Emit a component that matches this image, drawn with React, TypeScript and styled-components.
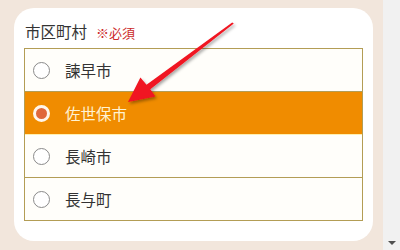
import React, { useState } from "react";
import styled, { createGlobalStyle } from "styled-components";

const Global = createGlobalStyle`
  html, body { margin: 0; padding: 0; }
  body {
    font-family: "Noto Sans CJK JP", "Noto Sans", sans-serif;
    background: #f2e6dc;
    overflow: hidden;
  }
`;

const Page = styled.div`
  position: relative;
  display: flex;
  width: 400px;
  height: 250px;
  overflow: hidden;
`;

const Main = styled.div`
  flex: 1;
  background: #f2e6dc;
  padding: 8px 10px 0 14px;
`;

const Scrollbar = styled.div`
  width: 17px;
  background: #f1f1f1;
  display: flex;
  flex-direction: column;
  justify-content: flex-end;
  align-items: center;
  padding-bottom: 5px;
  box-sizing: border-box;
`;

const ScrollArrow = styled.div`
  width: 0;
  height: 0;
  border-left: 4px solid transparent;
  border-right: 4px solid transparent;
  border-top: 4px solid #505050;
`;

const Card = styled.div`
  background: #fff;
  border-radius: 20px;
  height: 233px;
  box-sizing: border-box;
  padding: 10px 10px 0 10px;
`;

const Label = styled.div`
  display: flex;
  align-items: baseline;
  gap: 9px;
  font-size: 15.5px;
  color: #333;
  height: 30px;
  padding-left: 1px;
  line-height: 27px;
`;

const Required = styled.span`
  font-size: 13px;
  color: #cc2a2a;
`;

const List = styled.div`
  border: 1px solid #b39d55;
  display: flex;
  flex-direction: column;
`;

const Row = styled.label<{ $selected: boolean; $last?: boolean }>`
  display: flex;
  align-items: center;
  height: 42px;
  padding-left: 8px;
  gap: 15px;
  background: ${(p) => (p.$selected ? "#f08c00" : "#fffefa")};
  color: ${(p) => (p.$selected ? "#fff3d2" : "#333")};
  font-size: 15.5px;
  border-bottom: ${(p) => (p.$last ? "none" : p.$selected ? "1px solid #fff0b0" : "1px solid #b39d55")};
  cursor: pointer;
`;

const Radio = styled.span<{ $selected: boolean }>`
  width: 17px;
  height: 17px;
  border-radius: 50%;
  box-sizing: border-box;
  flex: none;
  background: ${(p) => (p.$selected ? "#e0683a" : "#fff")};
  border: ${(p) => (p.$selected ? "3.5px solid #fff6ea" : "1px solid #8a8a8a")};
`;

const ArrowLayer = styled.svg`
  position: absolute;
  left: 0;
  top: 0;
  pointer-events: none;
`;

const options = ["諫早市", "佐世保市", "長崎市", "長与町"];

export default function App() {
  const [sel, setSel] = useState(1);
  return (
    <>
      <Global />
      <Page>
        <Main>
          <Card>
            <Label>
              市区町村<Required>※必須</Required>
            </Label>
            <List>
              {options.map((o, i) => (
                <Row
                  key={o}
                  $selected={sel === i}
                  $last={i === options.length - 1}
                  onClick={() => setSel(i)}
                >
                  <Radio $selected={sel === i} />
                  {o}
                </Row>
              ))}
            </List>
          </Card>
        </Main>
        <Scrollbar>
          <ScrollArrow />
        </Scrollbar>
        <ArrowLayer width="400" height="250" viewBox="0 0 400 250">
          <defs>
            <filter id="sh" x="-20%" y="-20%" width="140%" height="140%">
              <feDropShadow dx="1.5" dy="2" stdDeviation="1.6" floodColor="#000" floodOpacity="0.35" />
            </filter>
          </defs>
          <polygon
            filter="url(#sh)"
            fill="#f01420"
            points="233.8,23.6 232.2,22.4 146.5,84.8 140.4,77.6 128,102 155.4,96.6 150.3,89.2"
          />
        </ArrowLayer>
      </Page>
    </>
  );
}
